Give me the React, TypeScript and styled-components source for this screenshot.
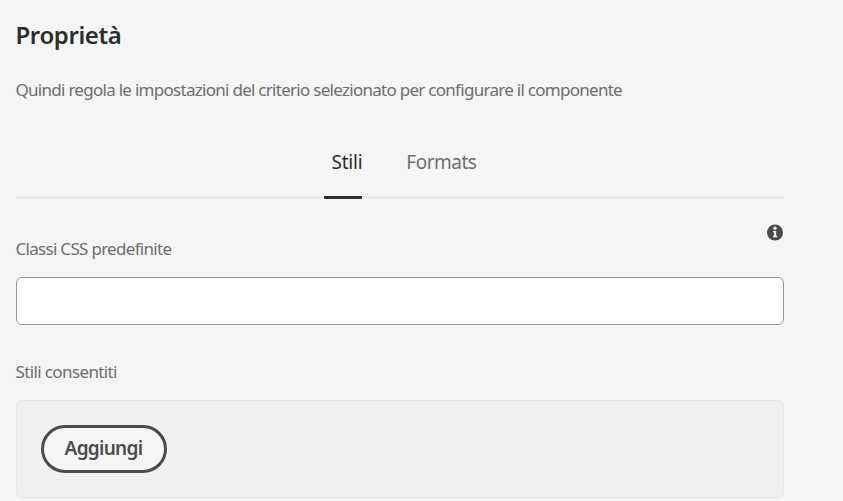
import React from "react";
import styled, { createGlobalStyle } from "styled-components";

const GlobalStyle = createGlobalStyle`
  *, *::before, *::after { box-sizing: border-box; }
  body {
    margin: 0;
    background: #f5f5f5;
    font-family: "Noto Sans", "Open Sans", sans-serif;
    overflow: hidden;
  }
`;

const Panel = styled.main`
  display: flex;
  flex-direction: column;
  width: 784px;
  height: 501px;
  padding-left: 16px;
`;

const Title = styled.h1`
  margin: 20px 0 0 -0.5px;
  font-size: 24px;
  line-height: 30px;
  font-weight: 600;
  letter-spacing: -0.4px;
  color: #2c2c2c;
`;

const Description = styled.p`
  margin: 28px 0 0 -0.5px;
  font-size: 17px;
  line-height: 24px;
  letter-spacing: -0.72px;
  color: #6e6e6e;
  white-space: nowrap;
`;

const TabList = styled.div`
  display: flex;
  justify-content: center;
  gap: 36px;
  height: 72px;
  margin-top: 25px;
  border-bottom: 3px solid #eaeaea;
`;

const Tab = styled.button<{ $active?: boolean }>`
  height: 72px;
  padding: 0 0 0 8px;
  border: 0;
  border-bottom: 3px solid transparent;
  background: ${(p) => (p.$active ? "linear-gradient(#2c2c2c, #2c2c2c) bottom / 100% 3px no-repeat border-box" : "none")};
  border-radius: 1px;
  font: inherit;
  font-size: 19px;
  line-height: 70px;
  letter-spacing: ${(p) => (p.$active ? "-0.25px" : "-0.5px")};
  color: ${(p) => (p.$active ? "#2c2c2c" : "#6e6e6e")};
`;

const InfoRow = styled.div`
  display: flex;
  justify-content: flex-end;
  height: 17px;
  margin-top: 25px;
`;

const Label = styled.label<{ $top: number; $spacing: number }>`
  margin: ${(p) => p.$top}px 0 0 -0.5px;
  font-size: 17px;
  line-height: 24px;
  letter-spacing: ${(p) => p.$spacing}px;
  color: #6e6e6e;
`;

const TextField = styled.input`
  width: 100%;
  height: 48px;
  margin: 16px 0 0;
  padding: 0 14px;
  border: 1px solid #959595;
  border-radius: 6px;
  background: #fff;
  font: inherit;
  outline: none;
`;

const StylesBox = styled.section`
  height: 98px;
  margin-top: 16px;
  padding: 24px;
  border: 1px solid #e6e6e6;
  border-radius: 6px;
  background: #f0f0f0;
`;

const AddButton = styled.button`
  display: flex;
  align-items: center;
  justify-content: center;
  width: 126px;
  height: 48px;
  padding: 0 1px 2px 0;
  border: 3px solid #4b4b4b;
  border-radius: 24px;
  background: #f5f5f5;
  font: inherit;
  font-size: 19px;
  font-weight: 600;
  letter-spacing: -0.7px;
  color: #4b4b4b;
`;

const InfoIcon = () => (
  <svg width="17" height="17" viewBox="0 0 17 17" aria-label="Info">
    <circle cx="8" cy="8.5" r="8" fill="#4b4b4b" />
    <circle cx="8" cy="4.3" r="1.7" fill="#f5f5f5" />
    <path d="M6 7h3.2v4.7h1V13.2H6v-1.5h1.1V8.3H6z" fill="#f5f5f5" />
  </svg>
);

export default function App() {
  return (
    <>
      <GlobalStyle />
      <Panel>
        <Title>Proprietà</Title>
        <Description>
          Quindi regola le impostazioni del criterio selezionato per configurare il componente
        </Description>
        <TabList role="tablist">
          <Tab role="tab" aria-selected $active>Stili</Tab>
          <Tab role="tab">Formats</Tab>
        </TabList>
        <InfoRow><InfoIcon /></InfoRow>
        <Label $top={-4} $spacing={-0.7} htmlFor="classi">Classi CSS predefinite</Label>
        <TextField id="classi" />
        <Label as="div" $top={35} $spacing={-0.62}>Stili consentiti</Label>
        <StylesBox>
          <AddButton>Aggiungi</AddButton>
        </StylesBox>
      </Panel>
    </>
  );
}
